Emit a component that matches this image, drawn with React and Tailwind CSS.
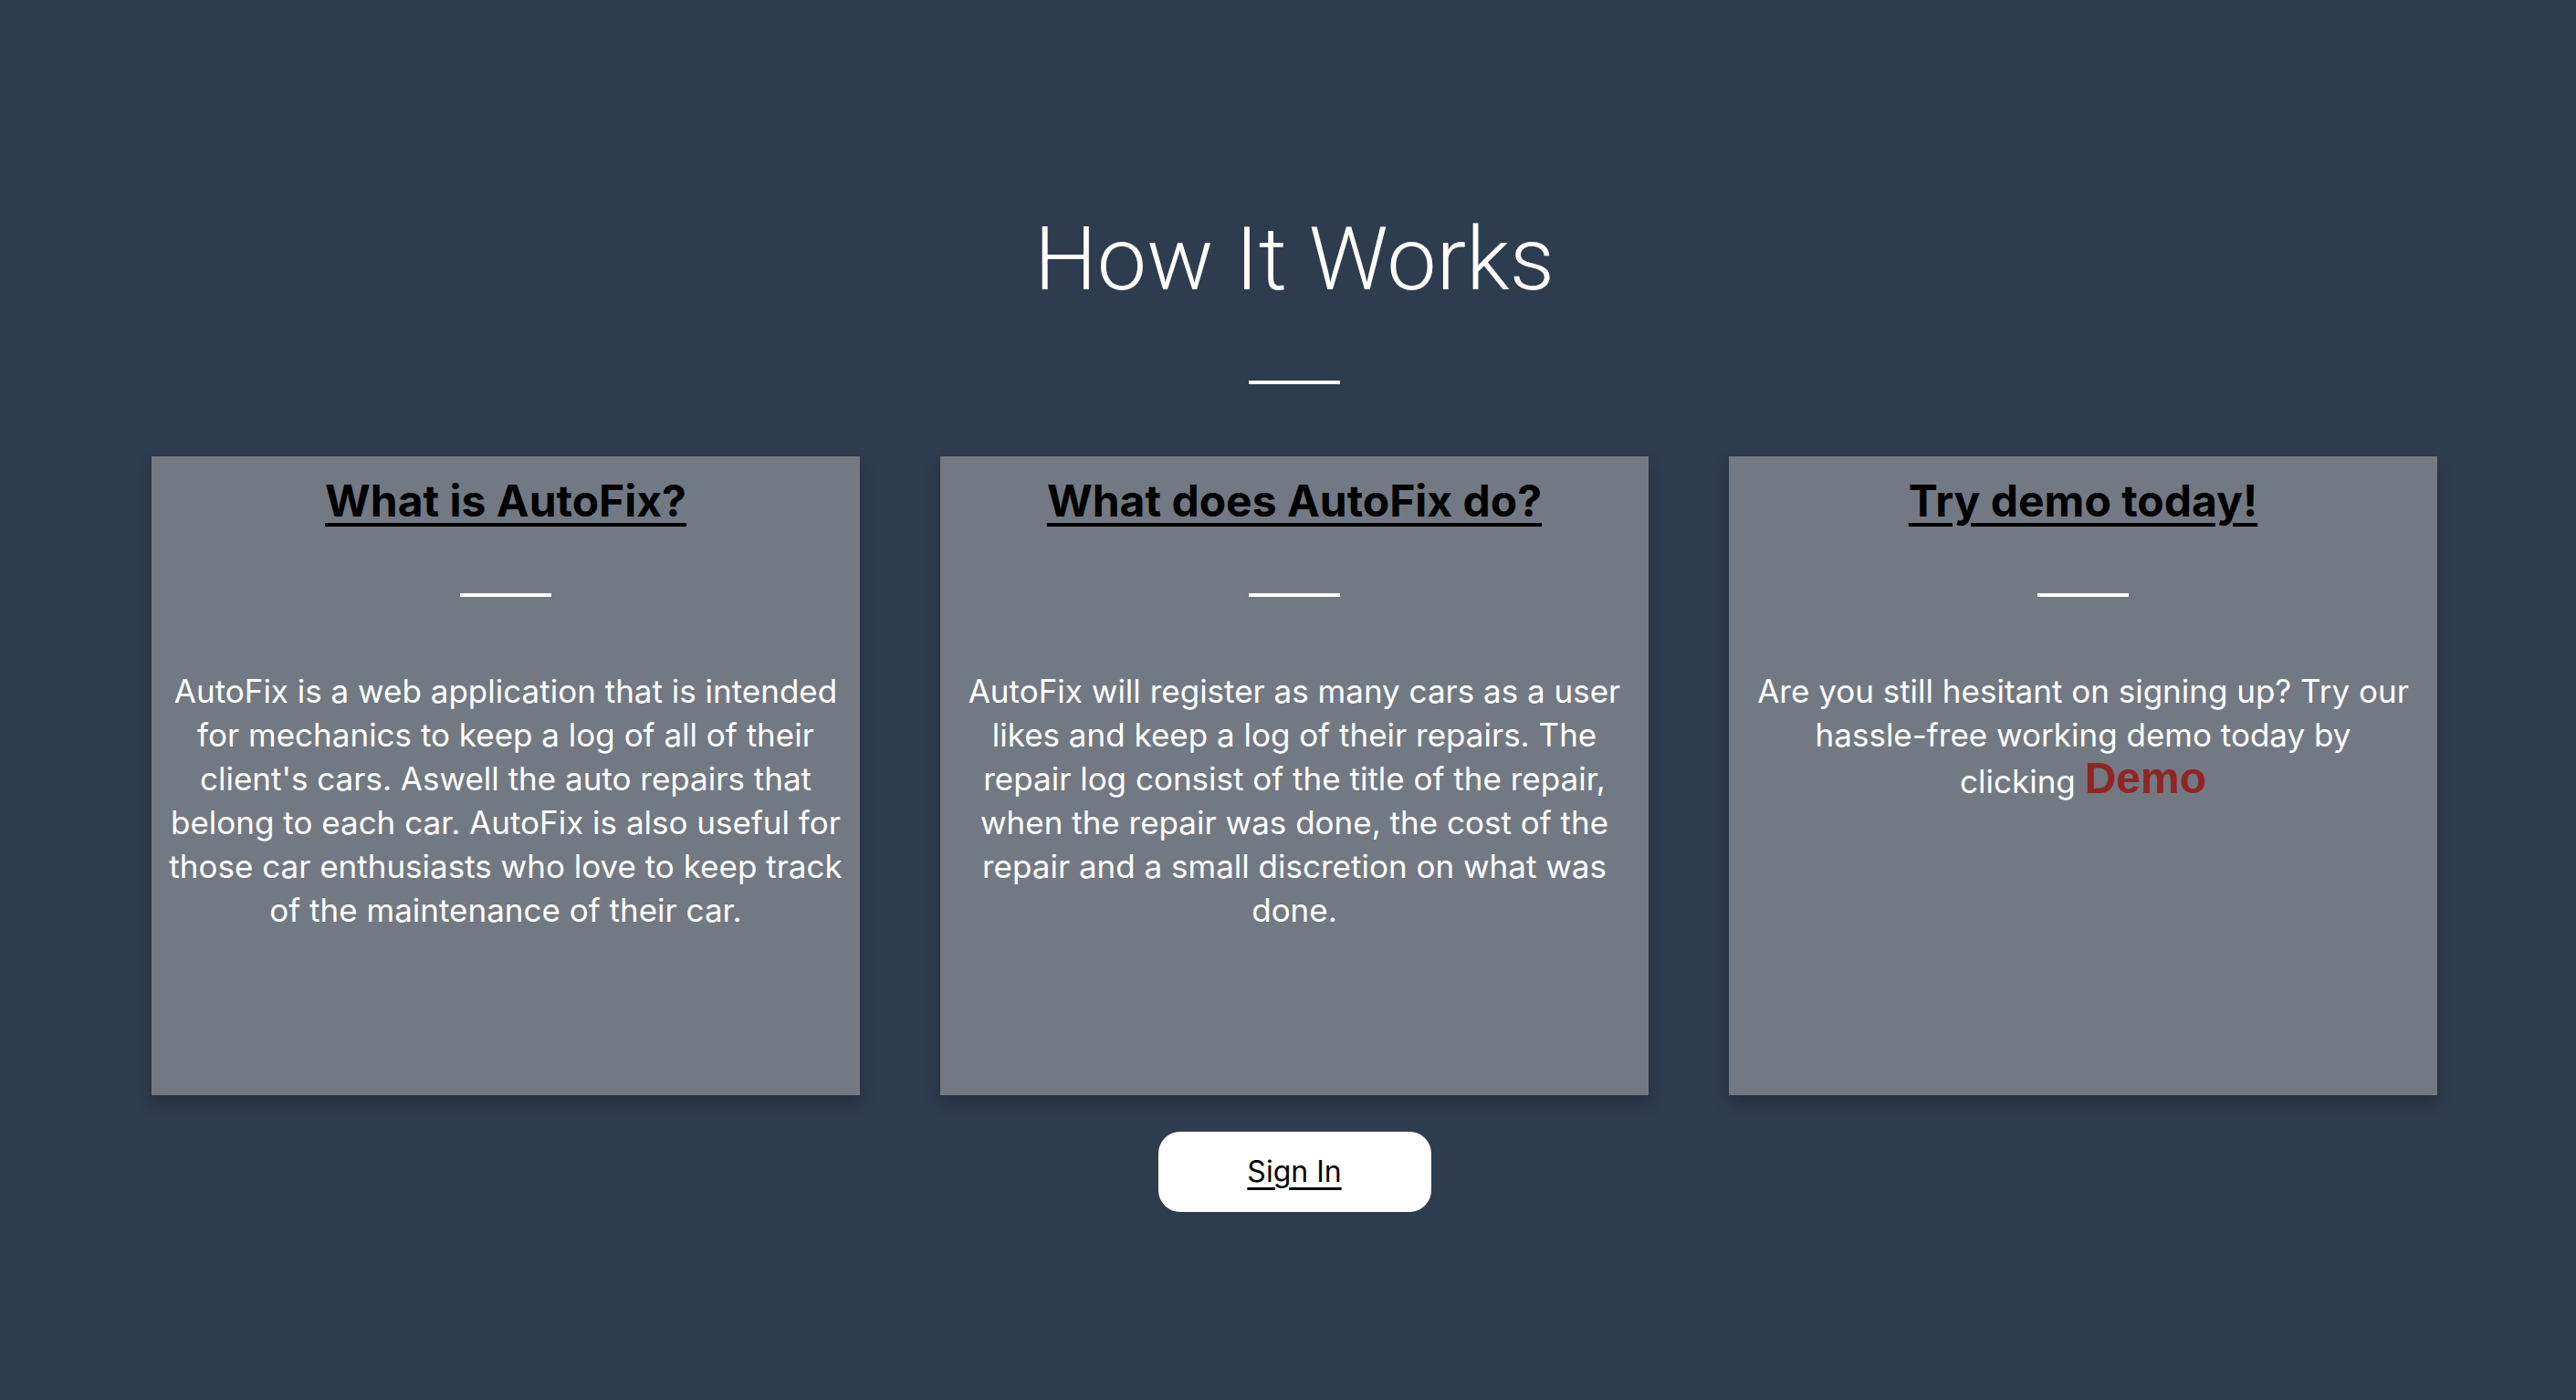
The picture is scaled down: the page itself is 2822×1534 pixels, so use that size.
const cards = [
  {
    title: "What is AutoFix?",
    lines: [
      "AutoFix is a web application that is intended",
      "for mechanics to keep a log of all of their",
      "client's cars. Aswell the auto repairs that",
      "belong to each car. AutoFix is also useful for",
      "those car enthusiasts who love to keep track",
      "of the maintenance of their car.",
    ],
  },
  {
    title: "What does AutoFix do?",
    lines: [
      "AutoFix will register as many cars as a user",
      "likes and keep a log of their repairs. The",
      "repair log consist of the title of the repair,",
      "when the repair was done, the cost of the",
      "repair and a small discretion on what was",
      "done.",
    ],
  },
];

function Card({ title, children }) {
  return (
    <div className="flex h-[700px] w-[776px] flex-col items-center bg-[#737982] pt-[25px] shadow-[0_8px_16px_rgba(0,0,0,0.22)]">
      <h2 className="text-[48px] font-bold leading-none text-black underline decoration-[4px] underline-offset-[7px]">
        {title}
      </h2>
      <div className="mt-[77px] h-[4px] w-[100px] bg-white" />
      <div className="mt-[79px] whitespace-nowrap text-center text-[35px] leading-[48px] text-white">
        {children}
      </div>
    </div>
  );
}

export default function App() {
  return (
    <div className="flex min-h-screen flex-col items-center bg-[#2e3c4f] pb-[180px] pl-[14px] pt-[236px] font-['Inter',sans-serif]">
      <h1 className="font-['Roboto',sans-serif] text-[97px] font-light leading-none text-white">
        How It Works
      </h1>
      <div className="mt-[84px] h-[4px] w-[100px] bg-white" />

      <div className="mt-[79px] flex gap-[88px]">
        {cards.map((card) => (
          <Card key={card.title} title={card.title}>
            {card.lines.map((line, i) => (
              <div key={i}>{line}</div>
            ))}
          </Card>
        ))}
        <Card title="Try demo today!">
          <div>Are you still hesitant on signing up? Try our</div>
          <div>hassle-free working demo today by</div>
          <div>
            clicking{" "}
            <a className="font-['Liberation_Sans',sans-serif] text-[48px] font-bold text-[#912524]">
              Demo
            </a>
          </div>
        </Card>
      </div>

      <button
        type="button"
        className="mt-[40px] flex h-[88px] w-[299px] items-center justify-center rounded-[24px] bg-white text-[32px] text-black underline underline-offset-[6px]"
      >
        Sign In
      </button>
    </div>
  );
}
